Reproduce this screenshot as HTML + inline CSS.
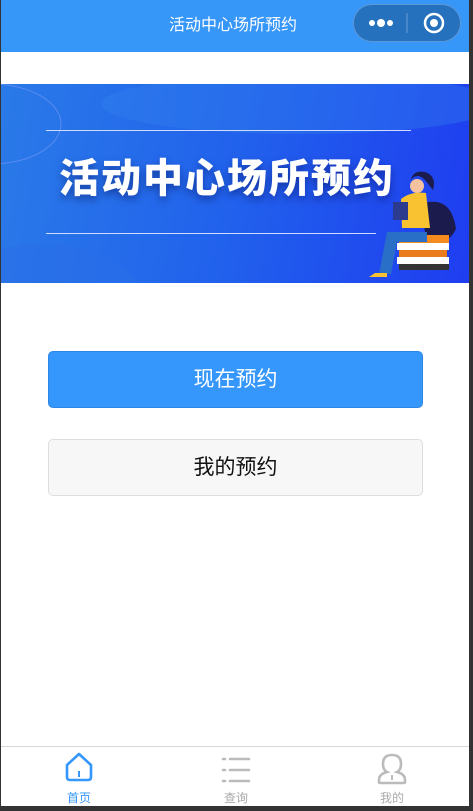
<!DOCTYPE html>
<html><head><meta charset="utf-8"><style>
*{margin:0;padding:0;box-sizing:border-box}
body{width:473px;height:811px;background:#333;position:relative;overflow:hidden;font-family:"Liberation Sans","Noto Sans CJK SC",sans-serif}
.page{position:absolute;left:1px;top:0;width:468px;height:806px;background:#fff;overflow:hidden}
.nav{position:absolute;left:0;top:0;width:468px;height:52px;background:#3797f9;color:#fff;font-size:16px;line-height:52px}
.nav .t{position:absolute;left:168px;top:0}
.cap{position:absolute;left:352px;top:4px;width:108px;height:38px;border-radius:19px;background:#2571bd;border:1px solid #5d96d3}
.banner{position:absolute;left:0;top:84px;width:468px;height:199px;background:linear-gradient(100deg,#2a7ae8 0%,#2161ec 50%,#1f3df0 100%);overflow:hidden}
.line{position:absolute;left:45px;width:365px;height:1px;background:#d0dcff}
.btitle{position:absolute;left:58px;top:66px;font-size:40px;font-weight:900;color:#fff;letter-spacing:2px;text-shadow:0 4px 8px rgba(0,0,60,.4);font-family:"Noto Sans CJK SC",sans-serif;line-height:50px}
.btn{position:absolute;left:47px;width:375px;height:57px;border-radius:5px;font-size:21px;text-align:center;line-height:56px}
.b1{top:351px;background:#3597fb;color:#fff;border:1px solid #2c86e6}
.b2{top:439px;background:#f7f7f7;color:#111;border:1px solid #ddd}
.tab{position:absolute;left:0;top:746px;width:468px;height:60px;border-top:1px solid #d8d8d8;background:#fff}
.ti{position:absolute;top:0;width:80px;text-align:center;font-size:12px;color:#aaa}
.ti span{position:absolute;left:0;width:80px;top:44px;line-height:14px}
</style></head><body>
<div class="page">
<div class="nav"><span class="t">活动中心场所预约</span>
<div class="cap">
<svg width="108" height="38" style="position:absolute;left:0;top:0">
<circle cx="18" cy="18" r="3" fill="#fff"/><circle cx="27" cy="18" r="4" fill="#fff"/><circle cx="36" cy="18" r="3" fill="#fff"/>
<line x1="53" y1="8" x2="53" y2="28" stroke="#6b9fd6" stroke-width="1"/>
<circle cx="80" cy="18" r="9" fill="none" stroke="#fff" stroke-width="2.5"/><circle cx="80" cy="18" r="4" fill="#fff"/>
</svg></div></div>
<div class="banner">
<svg width="468" height="199" style="position:absolute;left:0;top:0">
<ellipse cx="-10" cy="40" rx="70" ry="40" fill="none" stroke="#5a8cf0" stroke-width="1"/>
<ellipse cx="40" cy="230" rx="110" ry="70" fill="#2a6ee8" opacity=".5"/>
<ellipse cx="300" cy="20" rx="200" ry="30" fill="#3584ee" opacity=".35"/>
<path d="M420 120 q30 -10 35 25 q-10 20 -30 10z" fill="#1c1b4d"/>
<rect x="398" y="151" width="50" height="8" fill="#f58a1f"/>
<rect x="396" y="159" width="52" height="7" fill="#fff"/>
<rect x="398" y="166" width="48" height="7" fill="#e87c1d"/>
<rect x="396" y="173" width="52" height="7" fill="#fff"/>
<rect x="398" y="180" width="50" height="6" fill="#333"/>
<circle cx="416" cy="102" r="7" fill="#f5c2a0"/>
<path d="M410 96 q6 -8 14 0 l8 10 q4 -14 -8 -18 q-12 -2 -14 8z" fill="#1c1b4d"/>
<path d="M400 115 q10 -8 25 -6 l4 35 h-28z" fill="#f8c230"/>
<rect x="392" y="118" width="15" height="18" fill="#2c3b8e"/>
<path d="M378 190 l8 -42 h40 v10 h-30 l-6 32z" fill="#2a6fc7"/>
<path d="M368 193 h18 v-4 h-12z" fill="#f8c230"/>
</svg>
<div class="line" style="top:46px"></div>
<div class="line" style="top:149px;width:330px"></div>
<div class="btitle">活动中心场所预约</div>
</div>
<div class="btn b1">现在预约</div>
<div class="btn b2">我的预约</div>
<div class="tab">
<div class="ti" style="left:38px;color:#3597fb">
<svg width="80" height="42" style="position:absolute;left:0;top:0"><path d="M28 18 L40 7 L52 18 V30 q0 3 -3 3 H31 q-3 0 -3 -3z" fill="none" stroke="#3597fb" stroke-width="2.6" stroke-linejoin="round"/><line x1="40" y1="24" x2="40" y2="30" stroke="#3597fb" stroke-width="2"/></svg>
<span>首页</span></div>
<div class="ti" style="left:195px">
<svg width="80" height="42" style="position:absolute;left:0;top:0"><g stroke="#bbb" stroke-width="2.6" stroke-linecap="round"><line x1="27" y1="12" x2="29" y2="12"/><line x1="34" y1="12" x2="53" y2="12"/><line x1="27" y1="23" x2="29" y2="23"/><line x1="34" y1="23" x2="53" y2="23"/><line x1="27" y1="34" x2="29" y2="34"/><line x1="34" y1="34" x2="53" y2="34"/></g></svg>
<span>查询</span></div>
<div class="ti" style="left:351px">
<svg width="80" height="42" style="position:absolute;left:0;top:0"><path d="M40 8 q9 0 9 9 q0 6 -4 8 q8 2 8 8 v2 q0 1 -1 1 H28 q-1 0 -1 -1 v-2 q0 -6 8 -8 q-4 -2 -4 -8 q0 -9 9 -9z" fill="none" stroke="#bbb" stroke-width="2.6"/><line x1="40" y1="28" x2="40" y2="33" stroke="#bbb" stroke-width="2"/></svg>
<span>我的</span></div>
</div>
</div>
</body></html>
